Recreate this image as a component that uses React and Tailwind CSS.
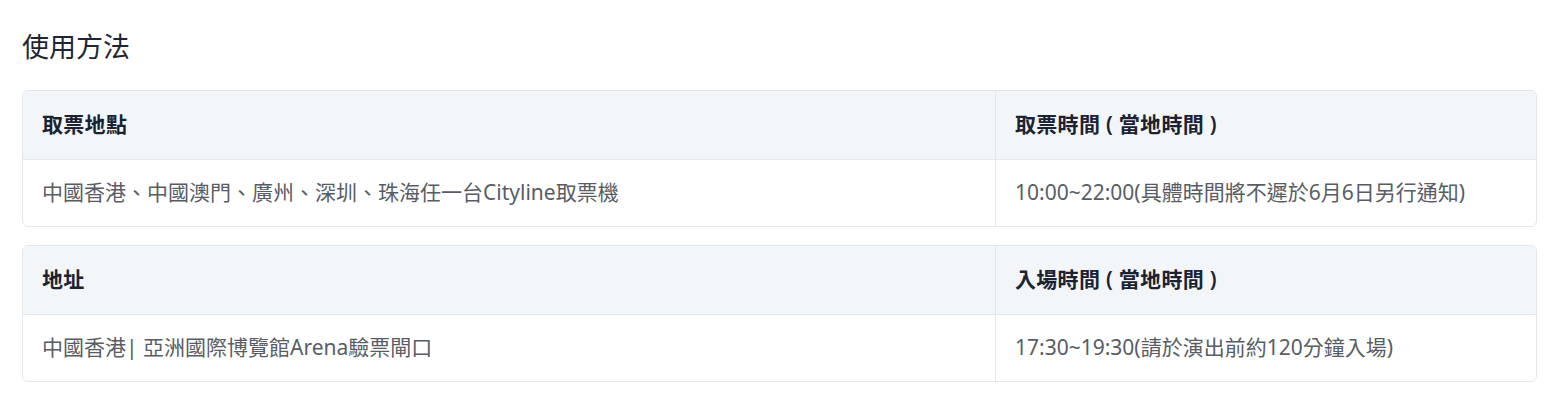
import React from "react";

const font = { fontFamily: '"Noto Sans", "Noto Sans CJK TC", sans-serif' };

const tables = [
  {
    head: ["取票地點", "取票時間 ( 當地時間 )"],
    body: ["中國香港、中國澳門、廣州、深圳、珠海任一台Cityline取票機", "10:00~22:00(具體時間將不遲於6月6日另行通知)"],
  },
  {
    head: ["地址", "入場時間 ( 當地時間 )"],
    body: ["中國香港| 亞洲國際博覽館Arena驗票閘口", "17:30~19:30(請於演出前約120分鐘入場)"],
  },
];

const App = () => {
  return (
    <div className="bg-white min-h-screen px-[22px] pt-[31px]" style={font}>
      <h2 className="text-[27px] leading-8 text-[#1f2633] mb-[27px]">使用方法</h2>

      <div className="flex flex-col gap-[18px] w-[1515px]">
        {tables.map((t, i) => (
          <div key={i} className="border border-[#e3e7ec] rounded-md overflow-hidden">
            {/* Header */}
            <div className="grid grid-cols-[972px_1fr] bg-[#f3f6f9] border-b border-[#e3e7ec] h-[69px]">
              {t.head.map((h, j) => (
                <div
                  key={j}
                  className={`flex items-center pl-[19px] pr-5 text-[21px] font-semibold tracking-[0.3px] text-[#1b2232] ${j === 1 ? "border-l border-[#e3e7ec]" : ""}`}
                >
                  {h}
                </div>
              ))}
            </div>
            {/* Body */}
            <div className="grid grid-cols-[972px_1fr] h-[66px]">
              {t.body.map((b, j) => (
                <div
                  key={j}
                  className={`flex items-center pl-[19px] pr-5 text-[21px] text-[#585d65] ${j === 1 ? "border-l border-[#e3e7ec]" : ""}`}
                >
                  {b}
                </div>
              ))}
            </div>
          </div>
        ))}
      </div>
    </div>
  );
};

export default App;
